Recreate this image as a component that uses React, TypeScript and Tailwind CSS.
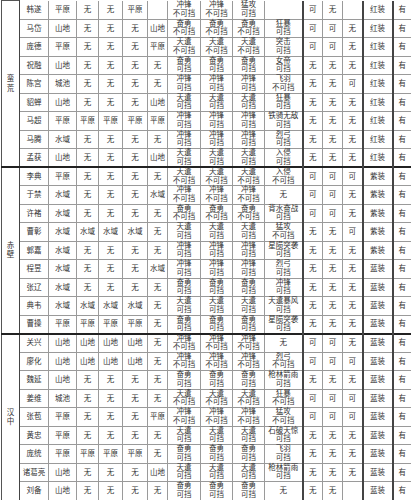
type Row = string[];

const x3 = (s: string) => [s, s, s];

const groups: { label: string; rows: Row[] }[] = [
  {
    label: '蛮荒',
    rows: [
      ['韩遂', '平原', '无', '无', '平原', '', '冲锋/不可挡', '冲锋/不可挡', '猛攻/可挡', '', '可', '无', '', '红装', '有'],
      ['马岱', '山地', '无', '无', '无', '山地', ...x3('奋勇/不可挡'), '狂暴/可挡', '可', '可', '无', '红装', '有'],
      ['庞德', '平原', '无', '无', '无', '平原', ...x3('天遣/不可挡'), '突击/可挡', '可', '可', '无', '红装', '有'],
      ['祝融', '山地', '无', '无', '无', '无', ...x3('奋勇/可挡'), '女帝/可挡', '无', '无', '无', '红装', '有'],
      ['陈宫', '城池', '无', '无', '无', '无', ...x3('冲锋/可挡'), '飞羽/不可挡', '无', '无', '可', '红装', '有'],
      ['貂蝉', '山地', '无', '无', '无', '山地', ...x3('天遣/可挡'), '狂暴/可挡', '无', '无', '无', '红装', '有'],
      ['马超', '平原', '平原', '平原', '平原', '平原', ...x3('冲锋/可挡'), '铁骑无敌/可挡', '无', '无', '无', '红装', '有'],
      ['马腾', '水域', '无', '无', '无', '无', ...x3('冲锋/可挡'), '烈弓/可挡', '无', '无', '无', '红装', '有'],
      ['孟获', '山地', '无', '无', '无', '山地', ...x3('天遣/可挡'), '入侵/可挡', '无', '无', '无', '红装', '有'],
    ],
  },
  {
    label: '赤壁',
    rows: [
      ['李典', '平原', '无', '无', '无', '无', ...x3('天遣/不可挡'), '入侵/不可挡', '可', '可', '可', '紫装', '有'],
      ['于禁', '水域', '无', '无', '无', '水域', ...x3('冲锋/不可挡'), '无', '可', '可', '无', '紫装', '有'],
      ['许褚', '水域', '无', '无', '无', '无', ...x3('奋勇/不可挡'), '背水奋战/可挡', '可', '可', '无', '紫装', '有'],
      ['曹彰', '水域', '水域', '水域', '水域', '无', ...x3('天遣/可挡'), '猛攻/不可挡', '无', '无', '可', '紫装', '有'],
      ['郭嘉', '水域', '无', '无', '无', '无', ...x3('冲锋/可挡'), '星陨突袭/可挡', '无', '无', '无', '紫装', '有'],
      ['程昱', '水域', '无', '无', '无', '水域', ...x3('冲锋/可挡'), '烈弓/可挡', '无', '无', '无', '蓝装', '有'],
      ['张辽', '水域', '无', '无', '无', '无', ...x3('奋勇/可挡'), '冲锋/可挡', '无', '无', '无', '蓝装', '有'],
      ['典韦', '水域', '水域', '水域', '水域', '无', ...x3('天遣/可挡'), '天遣暴风/可挡', '无', '无', '无', '蓝装', '有'],
      ['曹操', '平原', '平原', '平原', '平原', '无', ...x3('奋勇/可挡'), '星陨突袭/可挡', '无', '无', '无', '蓝装', '有'],
    ],
  },
  {
    label: '汉中',
    rows: [
      ['关兴', '山地', '山地', '山地', '山地', '无', ...x3('冲锋/不可挡'), '无', '可', '可', '无', '蓝装', '有'],
      ['廖化', '山地', '山地', '山地', '山地', '无', ...x3('冲锋/不可挡'), '烈弓/不可挡', '可', '可', '可', '蓝装', '有'],
      ['魏延', '山地', '无', '无', '无', '无', ...x3('奋勇/可挡'), '枪林箭雨/可挡', '无', '无', '无', '蓝装', '有'],
      ['姜维', '城池', '无', '无', '无', '无', ...x3('天遣/不可挡'), '狂暴/不可挡', '可', '可', '可', '蓝装', '有'],
      ['张苞', '平原', '无', '无', '无', '平原', ...x3('冲锋/不可挡'), '猛攻/不可挡', '可', '可', '可', '蓝装', '有'],
      ['黄忠', '平原', '无', '无', '无', '无', ...x3('天遣/可挡'), '石破天惊/可挡', '无', '无', '无', '蓝装', '有'],
      ['庞统', '平原', '平原', '平原', '平原', '无', ...x3('奋勇/可挡'), '飞羽/可挡', '无', '无', '无', '蓝装', '有'],
      ['诸葛亮', '山地', '无', '无', '无', '山地', ...x3('天遣/可挡'), '枪林箭雨/可挡', '无', '无', '无', '蓝装', '有'],
      ['刘备', '山地', '无', '无', '无', '无', ...x3('奋勇/可挡'), '无', '无', '无', '', '蓝装', '有'],
    ],
  },
];

// column widths, label column first
const widths = [
  'w-[18px]', 'w-[29px]', 'w-[28px]', 'w-[22px]', 'w-[24px]', 'w-[25px]', 'w-[20px]',
  'w-[33px]', 'w-[32px]', 'w-[32px]', 'w-[38px]', 'w-[20px]', 'w-[20px]', 'w-[20px]',
  'w-[30px]', 'w-[19px]',
];

// index in row -> heavier border on the right
const darkRight: Record<number, string> = {
  9: 'border-r-2 border-r-[#444]',
  12: 'border-r-2 border-r-[#444]',
  13: 'border-r-2 border-r-[#444]',
};

function Cell({ v }: { v: string }) {
  if (v.includes('/')) {
    const [a, b] = v.split('/');
    return (
      <div className="flex flex-col items-center leading-[8.5px] whitespace-nowrap">
        <span>{a}</span>
        <span>{b}</span>
      </div>
    );
  }
  return <span className="whitespace-nowrap">{v}</span>;
}

export default function App() {
  return (
    <div className="w-[411px] h-[500px] overflow-hidden bg-white font-['Liberation_Sans','Noto_Sans_CJK_SC',sans-serif] text-[7.5px] text-[#333]">
      <table className="w-[410px] ml-px table-fixed border-collapse">
        <colgroup>
          {widths.map((w, i) => (
            <col key={i} className={w} />
          ))}
        </colgroup>
        <tbody>
          {groups.map((g, gi) =>
            g.rows.map((row, ri) => {
              const top = gi > 0 && ri === 0 ? 'border-t-2 border-t-[#222]' : '';
              return (
                <tr key={`${gi}-${ri}`} className="h-[18.5px]">
                  {ri === 0 && (
                    <td
                      rowSpan={g.rows.length}
                      className={`border border-[#555] border-r-[#444] p-0 text-center align-middle ${top}`}
                    >
                      <div className="flex flex-col items-center leading-[9.5px]">
                        <span>{g.label[0]}</span>
                        <span>{g.label[1]}</span>
                      </div>
                    </td>
                  )}
                  {row.map((v, ci) => (
                    <td
                      key={ci}
                      className={`border border-[#9a9a9a] p-0 text-center align-middle ${
                        gi === 0 && ri === 0 ? 'border-t-0' : ''
                      } ${darkRight[ci] ?? ''} ${ci === 14 ? 'border-r-[#444]' : ''} ${top}`}
                    >
                      <Cell v={v} />
                    </td>
                  ))}
                </tr>
              );
            })
          )}
        </tbody>
      </table>
    </div>
  );
}
